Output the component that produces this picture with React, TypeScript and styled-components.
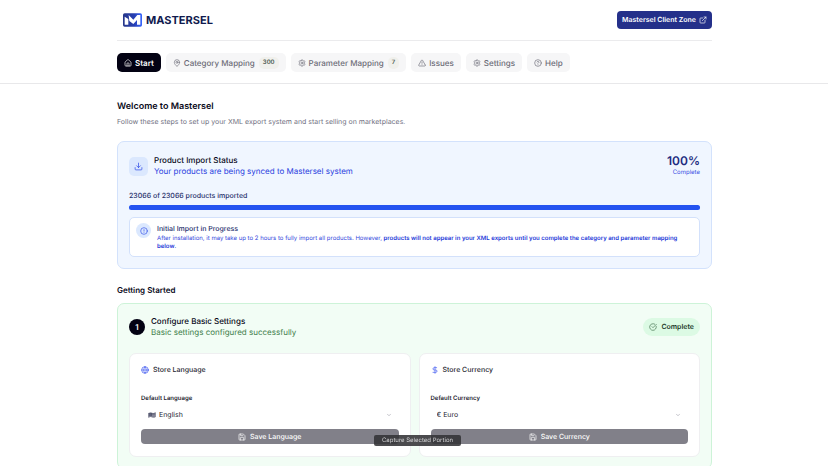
import React from "react";
import styled, { createGlobalStyle } from "styled-components";
import {
  House,
  MapPin,
  Settings,
  TriangleAlert,
  CircleQuestionMark,
  ExternalLink,
  Download,
  CircleAlert,
  CircleCheckBig,
  Globe,
  DollarSign,
  ChevronDown,
  Save,
} from "lucide-react";

const GlobalStyle = createGlobalStyle`
  * { box-sizing: border-box; }
  body {
    margin: 0;
    background: #fff;
    color: #0a0a1a;
    font-family: Inter, "Liberation Sans", sans-serif;
    font-size: 8px;
    line-height: 12px;
    text-rendering: geometricPrecision;
  }
  h1, h2, h3, h4, p { margin: 0; font: inherit; }
  button, select { font: inherit; text-rendering: inherit; }
  svg { flex: none; display: block; }
`;

const Container = styled.div`
  padding: 0 116px 0 117px;
`;

const Top = styled.header`
  border-bottom: 1px solid #e8e8ea;
`;

const Brand = styled.div`
  display: flex;
  align-items: center;
  justify-content: space-between;
  height: 41px;
  padding-left: 6px;
  border-bottom: 1px solid #ebebed;
`;

const Logo = styled.a`
  display: flex;
  align-items: center;
  gap: 4px;
  color: #101a4e;
  font-size: 11px;
  font-weight: 700;
  text-decoration: none;
`;

const ClientLink = styled.a`
  display: flex;
  align-items: center;
  gap: 3px;
  height: 18px;
  padding: 0 5px;
  border-radius: 4px;
  background: #24308a;
  color: #fff;
  font-size: 7px;
  font-weight: 600;
  text-decoration: none;
`;

const Nav = styled.nav`
  display: flex;
  gap: 5px;
  padding: 12px 0 11px;
`;

const Tab = styled.button<{ $active?: boolean }>`
  display: flex;
  align-items: center;
  gap: 3px;
  height: 19px;
  padding: 0 7px;
  border: 0;
  border-radius: 5px;
  background: ${(p) => (p.$active ? "#030213" : "#f6f6f7")};
  color: ${(p) => (p.$active ? "#fff" : "#6d6d78")};
  font-weight: ${(p) => (p.$active ? 600 : 500)};
  white-space: nowrap;
`;

const Count = styled.span`
  margin-left: 1px;
  padding: 0 4px;
  border-radius: 5px;
  background: #f0f0ec;
  color: #4c5a50;
  font-size: 6px;
  font-weight: 600;
`;

const Title = styled.h1`
  margin-top: 16px;
  font-size: 9px;
  font-weight: 600;
  line-height: 14px;
`;

const Lead = styled.p`
  margin-top: 2px;
  color: #717182;
  font-size: 7px;
`;

const Panel = styled.section<{ $tone: "blue" | "green" }>`
  padding: 12px 11px 11px;
  border: 1px solid ${(p) => (p.$tone === "blue" ? "#d3e2fc" : "#cdf3d8")};
  border-radius: 7px;
  background: ${(p) => (p.$tone === "blue" ? "#f0f6ff" : "#f2fdf5")};
`;

const ImportPanel = styled(Panel)`
  margin-top: 13px;
`;

const PanelHead = styled.div`
  display: flex;
  align-items: center;
  gap: 6px;
`;

const PanelText = styled.div<{ $tone: "blue" | "green" }>`
  flex: 1;
  font-weight: 500;
  line-height: 11px;
  p {
    color: ${(p) => (p.$tone === "blue" ? "#2a3fe0" : "#3f7f4c")};
    font-weight: 400;
  }
`;

const IconTile = styled.span`
  display: grid;
  place-items: center;
  width: 19px;
  height: 19px;
  border-radius: 5px;
  background: #dbe8fe;
  color: #3552e8;
`;

const Percent = styled.div`
  color: #1e2c80;
  font-size: 12px;
  font-weight: 600;
  line-height: 14px;
  text-align: right;
  small {
    display: block;
    color: #3a50e4;
    font-size: 6px;
    font-weight: 400;
    line-height: 10px;
  }
`;

const ProgressLabel = styled.p`
  margin-top: 12px;
  color: #27306b;
  font-size: 7px;
  font-weight: 500;
`;

const Track = styled.div`
  height: 5px;
  margin-top: 3px;
  border-radius: 3px;
  background: #bcd0fb;
`;

const Fill = styled.div`
  height: 100%;
  border-radius: 3px;
  background: #2453f0;
`;

const Notice = styled.div`
  display: flex;
  gap: 6px;
  margin-top: 7px;
  padding: 5px 6px;
  border: 1px solid #d3e1fb;
  border-radius: 5px;
  background: #fff;
  color: #3348dd;
  font-size: 6px;
  line-height: 8px;
  h3 {
    color: #26306e;
    font-size: 7px;
    font-weight: 500;
    line-height: 12px;
  }
  strong { color: #2338d8; font-weight: 600; }
`;

const Dot = styled.span`
  display: grid;
  flex: none;
  place-items: center;
  width: 15px;
  height: 15px;
  border-radius: 50%;
  background: #dbe8fe;
  color: #3552e8;
`;

const Heading = styled.h2`
  margin: 15px 0 7px;
  font-weight: 600;
`;

const Step = styled.span`
  display: grid;
  place-items: center;
  width: 16px;
  height: 16px;
  border-radius: 50%;
  background: #030213;
  color: #fff;
  font-size: 8px;
  font-weight: 600;
`;

const Status = styled.span`
  display: flex;
  align-items: center;
  gap: 4px;
  height: 18px;
  padding: 0 6px;
  border-radius: 9px;
  background: #dcfae4;
  color: #1d3a2a;
  font-size: 7px;
  font-weight: 600;
  svg { color: #3f6e4c; }
`;

const Cards = styled.div`
  display: grid;
  grid-template-columns: 1fr 1fr;
  gap: 8px;
  margin-top: 15px;
`;

const Card = styled.form`
  display: flex;
  flex-direction: column;
  padding: 10px 11px 12px;
  border: 1px solid #efeff1;
  border-radius: 7px;
  background: #fff;
`;

const CardTitle = styled.h3`
  display: flex;
  align-items: center;
  gap: 4px;
  color: #25252f;
  font-size: 7px;
  font-weight: 500;
  svg { color: #3b55f0; }
`;

const Label = styled.label`
  margin-top: 17px;
  color: #25252f;
  font-size: 6px;
  font-weight: 600;
`;

const Field = styled.div`
  display: grid;
  align-items: center;
  height: 16px;
  margin: 2px 0 6px;
  > * { grid-area: 1 / 1; }
  > svg { margin-left: 7px; pointer-events: none; }
  > svg:last-child { justify-self: end; margin-right: 7px; color: #8d8d98; }
`;

const Select = styled.select<{ $indent?: boolean }>`
  appearance: none;
  width: 100%;
  height: 16px;
  padding: 0 18px 0 ${(p) => (p.$indent ? "18px" : "6px")};
  border: 0;
  background: transparent;
  color: #25252f;
  font-size: 7px;
`;

const SaveButton = styled.button`
  display: flex;
  align-items: center;
  justify-content: center;
  gap: 4px;
  height: 15px;
  border: 0;
  border-radius: 4px;
  background: #818089;
  color: #fff;
  font-size: 7px;
  font-weight: 500;
`;

const CaptureHint = styled.div`
  position: fixed;
  bottom: 20px;
  left: 50%;
  width: 87px;
  height: 11px;
  margin-left: -40px;
  border-radius: 2px;
  background: rgba(50, 50, 53, 0.88);
  color: #d2d2d4;
  font-size: 6px;
  line-height: 11px;
  text-align: center;
  white-space: nowrap;
`;

function LogoMark() {
  return (
    <svg width="19" height="14" viewBox="0 0 57 42" aria-hidden="true">
      <defs>
        <linearGradient id="mark" x1="0" y1="0" x2="1" y2="0">
          <stop offset="0" stopColor="#263688" />
          <stop offset="0.6" stopColor="#2840b4" />
          <stop offset="1" stopColor="#3564ff" />
        </linearGradient>
      </defs>
      <rect x="0" y="1" width="57" height="40" rx="5" fill="url(#mark)" />
      <path d="M5 11L16 18V35H5ZM17 6L31 20L43 6H52V35H42V21L31 33L19 24Z" fill="#fff" />
    </svg>
  );
}

function FlagIcon() {
  return (
    <svg width="8" height="6" viewBox="0 0 24 18" aria-hidden="true">
      <path d="M1 3Q7 0 12 2T23 1V15Q17 18 12 16T1 17Z" fill="#50536a" />
      <path d="M12 6H22M12 10H22M2 13H22" stroke="#c4c5d0" strokeWidth="1.5" />
      <path d="M3 6H10M3 9H10" stroke="#8184a0" strokeWidth="1" />
    </svg>
  );
}

export default function App() {
  const progress = 100;
  return (
    <>
      <GlobalStyle />
      <Top>
        <Container>
          <Brand>
            <Logo href="#">
              <LogoMark />
              MASTERSEL
            </Logo>
            <ClientLink href="#">
              Mastersel Client Zone
              <ExternalLink size={8} />
            </ClientLink>
          </Brand>
          <Nav>
            <Tab $active><House size={8} />Start</Tab>
            <Tab><MapPin size={8} />Category Mapping <Count>300</Count></Tab>
            <Tab><Settings size={8} />Parameter Mapping <Count>7</Count></Tab>
            <Tab><TriangleAlert size={8} />Issues</Tab>
            <Tab><Settings size={8} />Settings</Tab>
            <Tab><CircleQuestionMark size={8} />Help</Tab>
          </Nav>
        </Container>
      </Top>
      <Container as="main">
        <Title>Welcome to Mastersel</Title>
        <Lead>Follow these steps to set up your XML export system and start selling on marketplaces.</Lead>

        <ImportPanel $tone="blue">
          <PanelHead>
            <IconTile><Download size={9} /></IconTile>
            <PanelText $tone="blue">
              <h2>Product Import Status</h2>
              <p>Your products are being synced to Mastersel system</p>
            </PanelText>
            <Percent>{progress}%<small>Complete</small></Percent>
          </PanelHead>
          <ProgressLabel>23066 of 23066 products imported</ProgressLabel>
          <Track role="progressbar" aria-label="Products imported" aria-valuenow={progress}>
            <Fill style={{ width: `${progress}%` }} />
          </Track>
          <Notice>
            <Dot><CircleAlert size={8} /></Dot>
            <div>
              <h3>Initial Import in Progress</h3>
              <p>
                After installation, it may take up to 2 hours to fully import all products. However,{" "}
                <strong>products will not appear in your XML exports until you complete the category and parameter mapping below</strong>.
              </p>
            </div>
          </Notice>
        </ImportPanel>

        <Heading>Getting Started</Heading>
        <Panel $tone="green">
          <PanelHead>
            <Step>1</Step>
            <PanelText $tone="green">
              <h2>Configure Basic Settings</h2>
              <p>Basic settings configured successfully</p>
            </PanelText>
            <Status><CircleCheckBig size={8} />Complete</Status>
          </PanelHead>
          <Cards>
            <Card onSubmit={(e) => e.preventDefault()}>
              <CardTitle><Globe size={8} />Store Language</CardTitle>
              <Label htmlFor="language">Default Language</Label>
              <Field>
                <FlagIcon />
                <Select id="language" $indent><option>English</option></Select>
                <ChevronDown size={6} />
              </Field>
              <SaveButton><Save size={8} />Save Language</SaveButton>
            </Card>
            <Card onSubmit={(e) => e.preventDefault()}>
              <CardTitle><DollarSign size={8} />Store Currency</CardTitle>
              <Label htmlFor="currency">Default Currency</Label>
              <Field>
                <Select id="currency"><option>€ Euro</option></Select>
                <ChevronDown size={6} />
              </Field>
              <SaveButton><Save size={8} />Save Currency</SaveButton>
            </Card>
          </Cards>
        </Panel>
      </Container>
      <CaptureHint>Capture Selected Portion</CaptureHint>
    </>
  );
}
